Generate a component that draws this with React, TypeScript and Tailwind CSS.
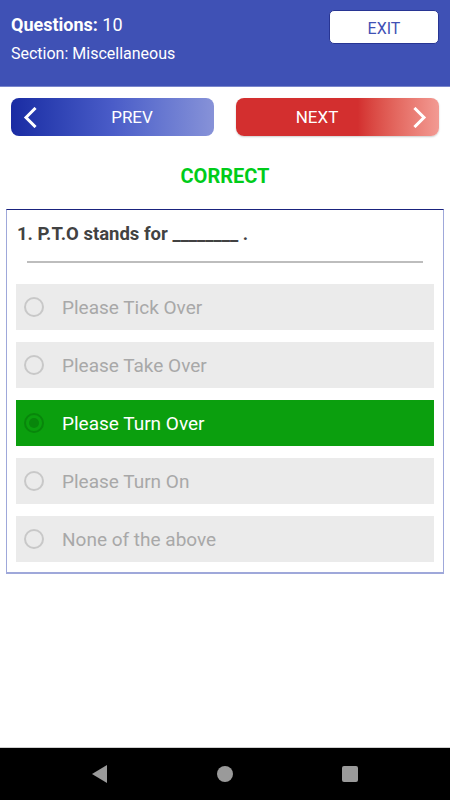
const options = [
  "Please Tick Over",
  "Please Take Over",
  "Please Turn Over",
  "Please Turn On",
  "None of the above",
];

const selected = 2;

function Chevron({ dir }: { dir: "left" | "right" }) {
  return (
    <svg width="14" height="21" viewBox="0 0 14 21" fill="none">
      <path
        d={dir === "left" ? "M11.5 2 L3 10.5 L11.5 19" : "M2.5 2 L11 10.5 L2.5 19"}
        stroke="white"
        strokeWidth="3"
        strokeLinecap="square"
      />
    </svg>
  );
}

export default function App() {
  return (
    <div
      className="flex h-[800px] w-[450px] flex-col bg-white"
      style={{ fontFamily: "Roboto, 'Noto Sans', sans-serif" }}
    >
      {/* header */}
      <div className="flex h-[87px] items-start justify-between border-b border-[#7986cb] bg-[#3f51b5] px-[11px]">
        <div className="pt-[13px] text-white">
          <div className="text-[18px] leading-[24px]">
            <span className="font-bold">Questions:</span> 10
          </div>
          <div className="mt-[6px] text-[16px] leading-[22px]">Section: Miscellaneous</div>
        </div>
        <button className="mt-[10px] flex h-[34px] w-[110px] items-center justify-center rounded-[5px] border border-[#283593] bg-white pt-[3px] text-[16px] text-[#3f51b5]">
          EXIT
        </button>
      </div>

      {/* prev / next */}
      <div className="mt-[11px] flex justify-between px-[11px]">
        <button className="flex h-[38px] w-[203px] items-center rounded-[8px] bg-gradient-to-r from-[#1a2ba3] via-[#4a5cc8] to-[#8792d8] pl-[12px] text-white">
          <Chevron dir="left" />
          <span className="flex-1 pl-[13px] pt-[2px] text-center text-[17px]">PREV</span>
        </button>
        <button className="flex h-[38px] w-[203px] items-center rounded-[8px] bg-gradient-to-r from-[#d32f2f] from-60% to-[#f29a93] pr-[12px] text-white shadow-[0_1px_2px_rgba(0,0,0,0.2)]">
          <span className="flex-1 pr-[15px] pt-[2px] text-center text-[17px]">NEXT</span>
          <Chevron dir="right" />
        </button>
      </div>

      <div className="mt-[28px] text-center text-[20px] font-bold leading-[24px] text-[#00cc1a]">CORRECT</div>

      {/* question card */}
      <div className="mx-[6px] mt-[21px] border-x-[1.5px] border-b-2 border-t border-x-[#9fa8da] border-b-[#9fa8da] border-t-[#1a237e] pb-[10px]">
        <div className="px-[10px] pt-[13px] text-[18.5px] font-bold leading-[22px] text-[#424242]">
          1. P.T.O stands for ________ .
        </div>
        <div className="mx-[20px] mt-[16px] h-[2px] bg-[#bdbdbd]" />
        <div className="mt-[21px] flex flex-col gap-[12px] px-[9px]">
          {options.map((o, i) => {
            const on = i === selected;
            return (
              <div
                key={o}
                className={`flex h-[46px] items-center ${on ? "bg-[#0b9f0e]" : "bg-[#ebebeb]"}`}
              >
                <div
                  className={`ml-[8px] flex h-[20px] w-[20px] items-center justify-center rounded-full border-2 ${
                    on ? "border-[#08860b]" : "border-[#c8c8c8]"
                  }`}
                >
                  {on && <div className="h-[10px] w-[10px] rounded-full bg-[#08860b]" />}
                </div>
                <span className={`ml-[18px] pt-[2px] text-[19px] ${on ? "text-white" : "text-[#a8a8a8]"}`}>{o}</span>
              </div>
            );
          })}
        </div>
      </div>

      <div className="flex-1" />

      {/* android nav bar */}
      <div className="flex h-[53px] items-center justify-center gap-[109px] border-t border-[#cfcfcf] bg-black">
        <svg width="16" height="18" viewBox="0 0 16 18">
          <path d="M0 9 L15 0 L15 18 Z" fill="#9a9a9a" />
        </svg>
        <div className="h-[16px] w-[16px] rounded-full bg-[#9a9a9a]" />
        <div className="h-[16px] w-[16px] rounded-[2px] bg-[#9a9a9a]" />
      </div>
    </div>
  );
}
